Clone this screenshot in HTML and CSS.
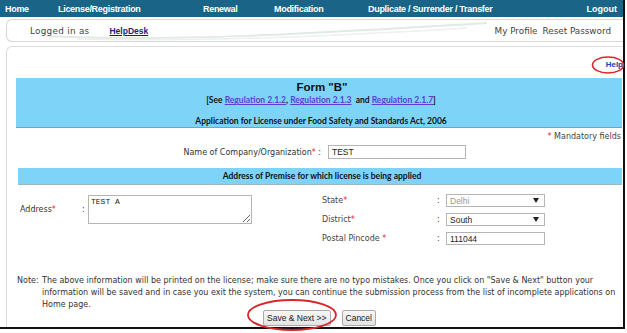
FILE: index.html
```html
<!DOCTYPE html>
<html>
<head>
<meta charset="utf-8">
<link rel="stylesheet" href="styles.css">
</head>
<body>
<div class="frame">
  <nav class="topnav">
    <a class="nav-item">Home</a>
    <a class="nav-item">License/Registration</a>
    <a class="nav-item">Renewal</a>
    <a class="nav-item">Modification</a>
    <a class="nav-item">Duplicate / Surrender / Transfer</a>
    <a class="nav-item logout">Logout</a>
  </nav>

  <div class="userbar">
    <svg class="swoosh" width="460" height="23" viewBox="0 0 460 23">
      <path d="M0 16 C 120 22, 260 14, 440 3" fill="none" stroke="#e3e9e4" stroke-width="2"/>
      <path d="M30 19 C 160 22, 290 16, 420 8" fill="none" stroke="#edf0ed" stroke-width="1.5"/>
    </svg>
    <span class="logged">Logged in as</span>
    <a class="user">HelpDesk</a>
    <span class="spacer"></span>
    <a class="ulink">My Profile</a>
    <a class="ulink">Reset Password</a>
  </div>

  <div class="panel">
    <div class="help-row"><a class="help">Help</a></div>

    <div class="form-head">
      <div class="title">Form "B"</div>
      <div class="see">[See <a class="reg">Regulation 2.1.2</a>, <a class="reg">Regulation 2.1.3</a>&nbsp; and <a class="reg">Regulation 2.1.7</a>]</div>
      <div class="app">Application for License under Food Safety and Standards Act, 2006</div>
    </div>

    <div class="mandatory"><span class="req">*</span> Mandatory fields</div>

    <div class="name-row">
      <label class="name-label">Name of Company/Organization<span class="req">*</span> :</label>
      <input class="field name-input" type="text" value="TEST">
    </div>

    <div class="sub-head">Address of Premise for which license is being applied</div>

    <div class="address">
      <div class="addr-left">
        <span class="addr-label">Address<span class="req">*</span></span>
        <span class="colon">:</span>
        <textarea class="addr-text">TEST A</textarea>
      </div>
      <div class="addr-right">
        <span class="r-label">State<span class="req">*</span></span>
        <span class="colon">:</span>
        <div class="select disabled"><span>Delhi</span><svg class="caret" width="6" height="5" viewBox="0 0 6 5"><path d="M0 0H6L3 5Z" fill="#222"/></svg></div>

        <span class="r-label">District<span class="req">*</span></span>
        <span class="colon">:</span>
        <div class="select"><span>South</span><svg class="caret" width="6" height="5" viewBox="0 0 6 5"><path d="M0 0H6L3 5Z" fill="#222"/></svg></div>

        <span class="r-label">Postal Pincode <span class="req">*</span></span>
        <span class="colon">:</span>
        <input class="field pin" type="text" value="111044">
      </div>
    </div>

    <div class="note">
      <span class="note-tag">Note:</span>
      <p class="note-text">The above information will be printed on the license; make sure there are no typo mistakes. Once you click on "Save &amp; Next" button your<br>information will be saved and in case you exit the system, you can continue the submission process from the list of incomplete applications on<br>Home page.</p>
    </div>

    <div class="buttons">
      <button class="btn">Save &amp; Next &gt;&gt;</button>
      <button class="btn">Cancel</button>
    </div>
  </div>

  <svg class="mark mark-help" width="36" height="20" viewBox="0 0 36 20"><ellipse cx="18" cy="10" rx="15.5" ry="8" fill="none" stroke="#d9262c" stroke-width="1.6"/></svg>
  <svg class="mark mark-save" width="94" height="34" viewBox="0 0 94 34"><ellipse cx="46" cy="17" rx="44" ry="15" fill="none" stroke="#d9262c" stroke-width="1.8"/></svg>
</div>
</body>
</html>
```

FILE: styles.css
```css
* { box-sizing: border-box; }
html, body { margin: 0; padding: 0; background: #fff; }
body { width: 627px; height: 333px; overflow: hidden; font-family: "DejaVu Sans", Verdana, sans-serif; font-size: 8px; color: #333; }

.frame { position: relative; width: 625px; height: 329px; border-right: 2px solid #111; border-bottom: 2px solid #111; display: flex; flex-direction: column; }

.topnav { height: 17px; background: #1a6487; display: grid; grid-template-columns: 53px 145px 71px 94px 1fr auto; align-items: center; padding: 0 6px 0 5px; }
.nav-item { color: #fff; font-family: "Liberation Sans", Arial, sans-serif; font-weight: bold; font-size: 9px; letter-spacing: -0.3px; }
.logout { letter-spacing: 0; }

.userbar { position: relative; margin: 2px 0 0 6px; height: 23px; border: 1px solid #d6d6d6; border-right: none; border-radius: 6px 0 0 6px; display: flex; align-items: center; padding-left: 23px; overflow: hidden; }
.swoosh { position: absolute; left: 40px; top: 0; }
.logged { position: relative; color: #444; font-size: 8.8px; letter-spacing: 0.3px; }
.user { position: relative; margin-left: 20px; color: #1b1b8a; font-family: "Liberation Sans", Arial, sans-serif; font-weight: bold; font-size: 8.5px; text-decoration: underline; }
.spacer { flex: 1; }
.ulink { position: relative; color: #444; font-size: 8.8px; margin-right: 5px; }
.ulink + .ulink { margin-right: 12px; }

.panel { flex: 1; margin: 4px 0 0 6px; border: 1px solid #dcdcdc; border-right: none; border-bottom: none; border-radius: 6px 0 0 0; padding-left: 9px; display: flex; flex-direction: column; }

.help-row { height: 31px; display: flex; justify-content: flex-end; align-items: center; padding-top: 4px; }
.help { color: #2a3aa6; font-family: "Liberation Sans", Arial, sans-serif; font-weight: bold; font-size: 8px; }

.form-head { background: #7ed4f8; border-bottom: 1px solid #6aa9c4; margin-right: 1px; height: 50px; text-align: center; color: #111; padding-top: 2px; }
.title { font-family: "Liberation Sans", Arial, sans-serif; font-weight: bold; font-size: 11.5px; line-height: 14px; padding-left: 6px; }
.see { font-family: Lato, "Open Sans", sans-serif; font-weight: bold; font-size: 8.5px; line-height: 12px; padding-left: 4px; }
.reg { color: #5b3fd3; text-decoration: underline; }
.app { font-family: Lato, "Open Sans", sans-serif; font-weight: bold; font-size: 8.5px; line-height: 12px; margin-top: 9px; padding-left: 4px; }

.mandatory { text-align: right; height: 16px; line-height: 16px; padding-top: 1px; margin-right: 2px; color: #444; }
.req { color: #e2262a; }

.name-row { display: flex; align-items: center; height: 16px; }
.name-label { width: 305px; text-align: right; color: #333; }
.field { font-family: "Liberation Sans", Arial, sans-serif; font-size: 8.5px; color: #222; border: 1px solid #b5b5b5; background: #fff; padding: 0 3px; height: 14px; margin: 0; outline: none; }
.name-input { width: 138px; margin-left: 7px; }

.sub-head { margin: 8px 1px 0 2px; height: 17px; background: #7ed4f8; border-bottom: 1px solid #9ab7c4; text-align: center; font-family: Lato, "Open Sans", sans-serif; font-weight: bold; font-size: 8.5px; line-height: 16px; color: #111; padding-left: 4px; }

.address { display: flex; align-items: flex-start; margin-top: 9px; padding-left: 4px; }
.addr-left { display: flex; align-items: center; height: 30px; }
.addr-label { width: 62px; }
.colon { width: 6px; }
.addr-text { width: 164px; height: 29px; border: 1px solid #b5b5b5; font-family: "Liberation Mono", monospace; font-size: 8px; padding: 1px 2px; margin: 0; color: #222; resize: both; }
.addr-right { margin-left: 70px; display: grid; grid-template-columns: 115px 9px 99px; row-gap: 6px; align-items: center; }
.r-label { color: #444; }
.select { height: 13px; border: 1px solid #b5b5b5; display: flex; align-items: center; justify-content: space-between; padding: 0 5px 0 3px; font-family: "Liberation Sans", Arial, sans-serif; font-size: 8.5px; color: #222; }
.select.disabled { color: #999; }
.pin { width: 99px; height: 13px; }

.note { display: flex; margin-top: 30px; line-height: 12px; color: #333; padding-left: 1px; }
.note-tag { width: 25px; flex: none; }
.note-text { margin: 0; white-space: nowrap; }

.buttons { display: flex; gap: 11px; justify-content: center; margin-top: -1px; padding-left: 0; }
.btn { height: 16px; padding: 0 3px; border: 1px solid #a9a9a9; border-radius: 2px; background: linear-gradient(#f7f7f7, #e3e3e3); font-family: "Liberation Sans", Arial, sans-serif; font-size: 8.5px; color: #222; }

.mark { position: absolute; }
.mark-help { left: 590px; top: 55px; }
.mark-save { left: 246px; top: 298px; }
```
